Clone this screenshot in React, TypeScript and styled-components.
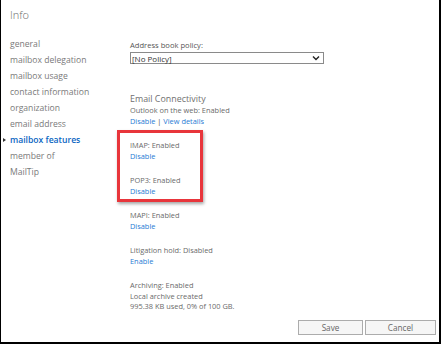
import React from 'react';
import styled, { createGlobalStyle } from 'styled-components';

const GlobalStyle = createGlobalStyle`
  html, body {
    margin: 0;
    padding: 0;
    background: #fff;
  }
  body {
    font-family: 'Open Sans', 'Noto Sans', sans-serif;
  }
`;

const navItems = [
  'general',
  'mailbox delegation',
  'mailbox usage',
  'contact information',
  'organization',
  'email address',
  'mailbox features',
  'member of',
  'MailTip'
];

type Feature = {
  lines: string[];
  links: string[];
};

const beforeBox: Feature[] = [
  { lines: ['Outlook on the web: Enabled'], links: ['Disable', 'View details'] }
];

const boxed: Feature[] = [
  { lines: ['IMAP: Enabled'], links: ['Disable'] },
  { lines: ['POP3: Enabled'], links: ['Disable'] }
];

const afterBox: Feature[] = [
  { lines: ['MAPI: Enabled'], links: ['Disable'] },
  { lines: ['Litigation hold: Disabled'], links: ['Enable'] },
  {
    lines: [
      'Archiving: Enabled',
      'Local archive created',
      '995.38 KB used, 0% of 100 GB.'
    ],
    links: []
  }
];

function FeatureBlock({ feature }: { feature: Feature }) {
  return (
    <Group>
      {feature.lines.map((l) => (
        <Line key={l}>{l}</Line>
      ))}
      {feature.links.length > 0 && (
        <Line>
          {feature.links.map((link, i) => (
            <React.Fragment key={link}>
              {i > 0 && <Sep> | </Sep>}
              <Link>{link}</Link>
            </React.Fragment>
          ))}
        </Line>
      )}
    </Group>
  );
}

export default function App() {
  return (
    <>
      <GlobalStyle />
      <Frame>
        <Title>Info</Title>
        <Main>
          <Nav>
            {navItems.map((item) => (
              <NavItem key={item} $active={item === 'mailbox features'}>
                {item}
              </NavItem>
            ))}
          </Nav>
          <Content>
            <Label>Address book policy:</Label>
            <Select>
              <span>[No Policy]</span>
              <svg width="8" height="6" viewBox="0 0 8 6">
                <path
                  d="M1 1.5 L4 4.5 L7 1.5"
                  fill="none"
                  stroke="#222"
                  strokeWidth="1.4"
                />
              </svg>
            </Select>
            <Heading>Email Connectivity</Heading>
            {beforeBox.map((f) => (
              <FeatureBlock key={f.lines[0]} feature={f} />
            ))}
            <Highlight>
              {boxed.map((f) => (
                <FeatureBlock key={f.lines[0]} feature={f} />
              ))}
            </Highlight>
            {afterBox.map((f) => (
              <FeatureBlock key={f.lines[0]} feature={f} />
            ))}
          </Content>
        </Main>
        <Footer>
          <Button $width={65}>Save</Button>
          <Button $width={71}>Cancel</Button>
        </Footer>
      </Frame>
    </>
  );
}

const Frame = styled.div`
  width: 441px;
  height: 344px;
  box-sizing: border-box;
  border-left: 1px solid #000;
  border-right: 2px solid #000;
  border-bottom: 2px solid #000;
  display: flex;
  flex-direction: column;
  background: #fff;
  overflow: hidden;
`;

const Title = styled.div`
  height: 36px;
  padding: 7px 0 0 9px;
  box-sizing: border-box;
  font-size: 11px;
  font-weight: 300;
  color: #6a6a6a;
  line-height: 16px;
`;

const Main = styled.div`
  flex: 1;
  display: flex;
  min-height: 0;
`;

const Nav = styled.ul`
  list-style: none;
  margin: 0;
  padding: 0 0 0 9px;
  width: 129px;
  box-sizing: border-box;
  flex-shrink: 0;
`;

const NavItem = styled.li<{ $active?: boolean }>`
  position: relative;
  height: 16px;
  line-height: 16px;
  font-size: 8.6px;
  white-space: nowrap;
  color: ${(p) => (p.$active ? '#0b66c2' : '#7a7a7a')};
  font-weight: ${(p) => (p.$active ? 600 : 400)};

  &::before {
    content: '';
    display: ${(p) => (p.$active ? 'block' : 'none')};
    position: absolute;
    left: -7px;
    top: 6px;
    border-left: 3px solid #333;
    border-top: 2.5px solid transparent;
    border-bottom: 2.5px solid transparent;
  }
`;

const Content = styled.div`
  flex: 1;
  padding-top: 4px;
  color: #666;
`;

const Label = styled.div`
  font-size: 7.6px;
  line-height: 10px;
  color: #555;
`;

const Select = styled.div`
  margin-top: 2px;
  width: 194px;
  height: 12px;
  box-sizing: border-box;
  border: 1px solid #8a8a8a;
  display: flex;
  align-items: center;
  justify-content: space-between;
  padding: 0 3px 0 1px;
  font-size: 8px;
  color: #333;
`;

const Heading = styled.div`
  margin-top: 28px;
  font-size: 8.9px;
  line-height: 13px;
  color: #707070;
`;

const Group = styled.div`
  margin-bottom: 14px;
`;

const Line = styled.div`
  font-size: 7.4px;
  line-height: 10.5px;
  color: #6a6a6a;
  white-space: nowrap;
`;

const Link = styled.span`
  color: #1f7bd4;
`;

const Sep = styled.span`
  color: #444;
`;

const Highlight = styled.div`
  position: relative;

  &::after {
    content: '';
    position: absolute;
    left: -13px;
    top: -10px;
    width: 86px;
    height: 72px;
    box-sizing: border-box;
    border: 3px solid #e8353b;
    box-shadow: 1px 2px 3px rgba(0, 0, 0, 0.35);
    pointer-events: none;
  }
`;

const Footer = styled.div`
  display: flex;
  justify-content: flex-end;
  gap: 2px;
  padding: 0 3px 7px 0;
`;

const Button = styled.button<{ $width: number }>`
  width: ${(p) => p.$width}px;
  height: 15px;
  padding: 0;
  border: 1px solid #acacac;
  background: #f6f6f6;
  font-family: 'Open Sans', 'Noto Sans', sans-serif;
  font-size: 8.2px;
  color: #666;
  line-height: 13px;
`;
